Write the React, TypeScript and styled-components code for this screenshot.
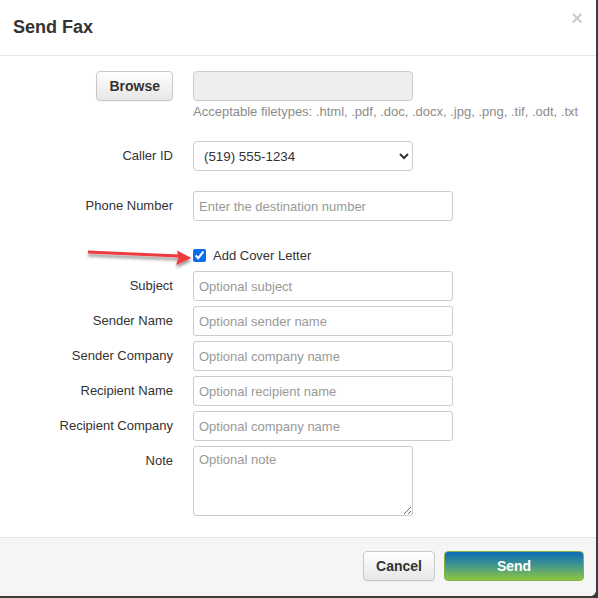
import styled, { createGlobalStyle } from 'styled-components';

const GlobalStyle = createGlobalStyle`
  html, body {
    margin: 0;
    padding: 0;
    background: #3b3b3b;
  }
  body {
    font-family: "Liberation Sans", Arial, sans-serif;
    color: #333;
  }
`;

const Modal = styled.div`
  width: 596px;
  height: 596px;
  background: #fff;
  border-radius: 0 0 6px 0;
  display: flex;
  flex-direction: column;
  overflow: hidden;
`;

const Header = styled.div`
  position: relative;
  padding: 15px 13px;
  border-bottom: 1px solid #e5e5e5;
`;

const Title = styled.h4`
  margin: 0;
  font-size: 18px;
  font-weight: bold;
  line-height: 25px;
  color: #333;
`;

const Close = styled.button`
  position: absolute;
  top: 8px;
  right: 13px;
  border: 0;
  background: none;
  padding: 0;
  font-family: "Liberation Sans", Arial, sans-serif;
  font-size: 20px;
  font-weight: bold;
  line-height: 21px;
  color: #000;
  opacity: 0.2;
`;

const Body = styled.div`
  flex: 1;
  padding: 15px 0 0;
`;

const Row = styled.div<{ $mb: number }>`
  position: relative;
  display: grid;
  grid-template-columns: 173px 1fr;
  column-gap: 20px;
  margin-bottom: ${p => p.$mb}px;
`;

const Label = styled.label`
  text-align: right;
  font-size: 13px;
  line-height: 16px;
  padding-top: 7px;
  color: #333;
`;

const Cell = styled.div`
  display: flex;
  flex-direction: column;
  align-items: flex-start;
`;

const RightCell = styled.div`
  display: flex;
  justify-content: flex-end;
`;

const GrayButton = styled.button`
  height: 30px;
  padding: 0 12px;
  border: 1px solid #c8c8c8;
  border-radius: 4px;
  background: linear-gradient(to bottom, #ffffff 0%, #e6e6e6 100%);
  font-family: "Liberation Sans", Arial, sans-serif;
  font-size: 14px;
  font-weight: bold;
  color: #333;
  box-shadow: 0 1px 1px rgba(0, 0, 0, 0.05);
`;

const FileBox = styled.div`
  width: 220px;
  height: 30px;
  box-sizing: border-box;
  background: #eee;
  border: 1px solid #ccc;
  border-radius: 4px;
`;

const Help = styled.div`
  margin-top: 3px;
  font-size: 13px;
  line-height: 16px;
  color: #8c8c8c;
  white-space: nowrap;
`;

const Select = styled.select`
  width: 220px;
  height: 30px;
  box-sizing: border-box;
  border: 1px solid #ccc;
  border-radius: 4px;
  background: #fff;
  padding: 0 6px;
  font-family: "Liberation Sans", Arial, sans-serif;
  font-size: 13.33px;
  color: #333;
`;

const Input = styled.input<{ $w: number }>`
  width: ${p => p.$w}px;
  height: 30px;
  box-sizing: border-box;
  border: 1px solid #ccc;
  border-radius: 3px;
  padding: 0 5px;
  font-family: "Liberation Sans", Arial, sans-serif;
  font-size: 13px;
  color: #333;
  &::placeholder {
    color: #999;
  }
`;

const TextArea = styled.textarea`
  width: 220px;
  height: 70px;
  box-sizing: border-box;
  border: 1px solid #ccc;
  border-radius: 3px;
  padding: 5px;
  font-family: "Liberation Sans", Arial, sans-serif;
  font-size: 13px;
  color: #333;
  resize: both;
  &::placeholder {
    color: #999;
  }
`;

const CheckLine = styled.label`
  display: flex;
  align-items: center;
  gap: 7px;
  height: 20px;
  font-size: 13px;
  color: #333;
  input {
    margin: 0;
    width: 13px;
    height: 13px;
    accent-color: #0b6cf0;
  }
`;

const Arrow = styled.svg`
  position: absolute;
  left: 80px;
  top: -5px;
  overflow: visible;
`;

const Footer = styled.div`
  display: flex;
  justify-content: flex-end;
  gap: 9px;
  padding: 13px 12px 15px;
  border-top: 1px solid #e5e5e5;
  background: #f5f5f5;
`;

const SendButton = styled.button`
  width: 140px;
  height: 30px;
  border: 1px solid #86b444;
  border-radius: 4px;
  background: linear-gradient(to bottom, #0a6bb8 0%, #3f948f 45%, #8dc63f 100%);
  font-family: "Liberation Sans", Arial, sans-serif;
  font-size: 14px;
  font-weight: bold;
  color: #fff;
`;

const fields = [
  { label: 'Subject', placeholder: 'Optional subject' },
  { label: 'Sender Name', placeholder: 'Optional sender name' },
  { label: 'Sender Company', placeholder: 'Optional company name' },
  { label: 'Recipient Name', placeholder: 'Optional recipient name' },
  { label: 'Recipient Company', placeholder: 'Optional company name' },
];

export default function App() {
  return (
    <>
      <GlobalStyle />
      <Modal>
        <Header>
          <Title>Send Fax</Title>
          <Close>×</Close>
        </Header>
        <Body>
          <Row $mb={21}>
            <RightCell>
              <GrayButton>Browse</GrayButton>
            </RightCell>
            <Cell>
              <FileBox />
              <Help>Acceptable filetypes: .html, .pdf, .doc, .docx, .jpg, .png, .tif, .odt, .txt</Help>
            </Cell>
          </Row>
          <Row $mb={20}>
            <Label>Caller ID</Label>
            <Cell>
              <Select defaultValue="1">
                <option value="1">(519) 555-1234</option>
              </Select>
            </Cell>
          </Row>
          <Row $mb={24}>
            <Label>Phone Number</Label>
            <Cell>
              <Input $w={260} placeholder="Enter the destination number" />
            </Cell>
          </Row>
          <Row $mb={6}>
            <div />
            <Cell>
              <CheckLine>
                <input type="checkbox" defaultChecked />
                Add Cover Letter
              </CheckLine>
            </Cell>
            <Arrow width="120" height="30" viewBox="0 0 120 30">
              <defs>
                <filter id="arrowShadow" x="-20%" y="-50%" width="140%" height="250%">
                  <feDropShadow dx="0" dy="3" stdDeviation="1.6" floodColor="#000" floodOpacity="0.4" />
                </filter>
              </defs>
              <g filter="url(#arrowShadow)" fill="#ee3a3f" stroke="none">
                <path d="M8 10.6 L99 14.6 L99 17.6 L8 13.4 Z" />
                <path d="M111.5 18 L97 10.5 L98.5 18 L96 25 Z" />
              </g>
            </Arrow>
          </Row>
          {fields.map(f => (
            <Row $mb={5} key={f.label + f.placeholder}>
              <Label>{f.label}</Label>
              <Cell>
                <Input $w={260} placeholder={f.placeholder} />
              </Cell>
            </Row>
          ))}
          <Row $mb={0}>
            <Label>Note</Label>
            <Cell>
              <TextArea placeholder="Optional note" />
            </Cell>
          </Row>
        </Body>
        <Footer>
          <GrayButton>Cancel</GrayButton>
          <SendButton>Send</SendButton>
        </Footer>
      </Modal>
    </>
  );
}
